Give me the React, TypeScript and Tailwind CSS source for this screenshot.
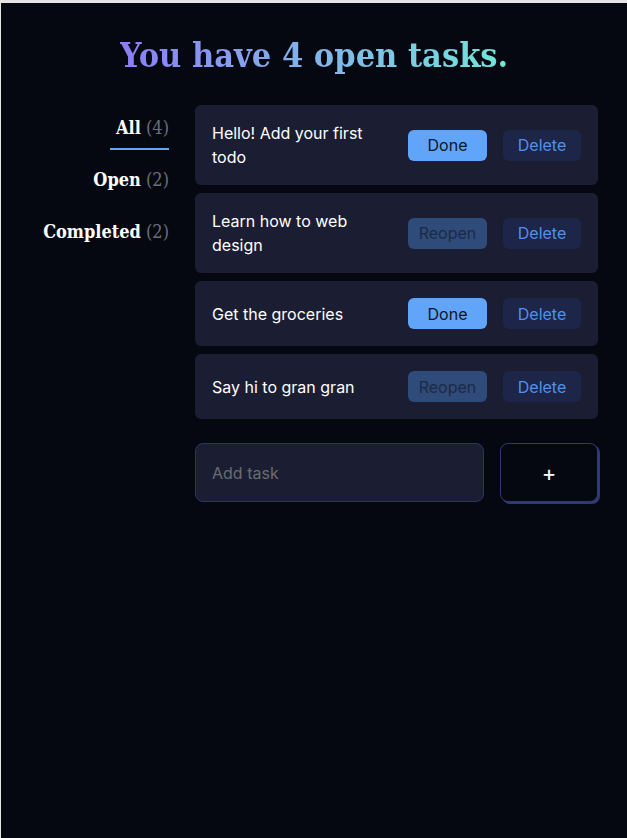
import React, { useState } from 'react'

interface Todo {
  id: number
  title: string
  done: boolean
}

const initialTodos: Todo[] = [
  { id: 1, title: 'Hello! Add your first todo', done: false },
  { id: 2, title: 'Learn how to web design', done: true },
  { id: 3, title: 'Get the groceries', done: false },
  { id: 4, title: 'Say hi to gran gran', done: true },
]

const slab = "font-['DejaVu_Serif_Condensed','DejaVu_Serif',serif]"

export default function App() {
  const [todos] = useState<Todo[]>(initialTodos)
  const openCount = todos.filter((t) => !t.done).length
  const doneCount = todos.length - openCount

  const filters = [
    { label: 'All', count: todos.length, active: true },
    { label: 'Open', count: openCount, active: false },
    { label: 'Completed', count: doneCount, active: false },
  ]

  return (
    <div className="min-h-screen bg-[#050810] border-t-[3px] border-l border-[#e4e4e4] font-['Inter',sans-serif] text-white">
      {/* 标题 */}
      <h1
        className={`${slab} pt-[30px] text-center text-[34px] font-bold leading-[44px] bg-gradient-to-r from-[#8b7cf6] to-[#6ee7d8] bg-clip-text text-transparent w-fit mx-auto`}
      >
        You have {todos.length} open tasks.
      </h1>

      <div className="flex gap-[26px] pl-[29px] pr-[29px] pt-[28px]">
        {/* 筛选 */}
        <nav className={`${slab} w-[139px] flex flex-col items-end text-[18px]`}>
          {filters.map((f) => (
            <div key={f.label} className="h-[52px] flex flex-col items-end">
              <div className="pt-[11px] leading-[24px] whitespace-nowrap">
                <span className="font-bold text-white">{f.label}</span>{' '}
                <span className="text-[#6b6e76]">({f.count})</span>
              </div>
              {f.active && <div className="mt-[8px] h-[2px] w-[59px] bg-[#60a5fa]" />}
            </div>
          ))}
        </nav>

        {/* 列表 */}
        <main className="flex-1">
          <ul className="flex flex-col gap-2">
            {todos.map((t) => (
              <li
                key={t.id}
                className={`flex items-center gap-4 rounded-md bg-[#1b1e32] px-[17px] ${
                  t.title.length > 20 ? 'h-[80px]' : 'h-[65px]'
                }`}
              >
                <span className="flex-1 text-[16px] leading-[24px] text-white">{t.title}</span>
                {t.done ? (
                  <button className="w-[79px] h-[31px] rounded-md bg-[#2f4b79] text-[16px] text-[#1c2a46]">
                    Reopen
                  </button>
                ) : (
                  <button className="w-[79px] h-[31px] rounded-md bg-[#60a5fa] text-[16px] text-[#0d1424]">
                    Done
                  </button>
                )}
                <button className="w-[78px] h-[31px] rounded-md bg-[#1d2548] text-[16px] text-[#4f91f0]">
                  Delete
                </button>
              </li>
            ))}
          </ul>

          {/* 添加任务 */}
          <div className="mt-6 flex gap-4">
            <input
              placeholder="Add task"
              className="flex-1 h-[59px] rounded-lg bg-[#1b1e32] border border-[#2b3563] px-4 text-[16px] text-white placeholder:text-[#6a6c72] outline-none"
            />
            <button className="w-[98px] h-[59px] rounded-lg bg-[#050810] border border-[#2f3a6e] shadow-[2px_2px_0_#2f3a6e] text-[22px] leading-none text-white">
              +
            </button>
          </div>
        </main>
      </div>
    </div>
  )
}
